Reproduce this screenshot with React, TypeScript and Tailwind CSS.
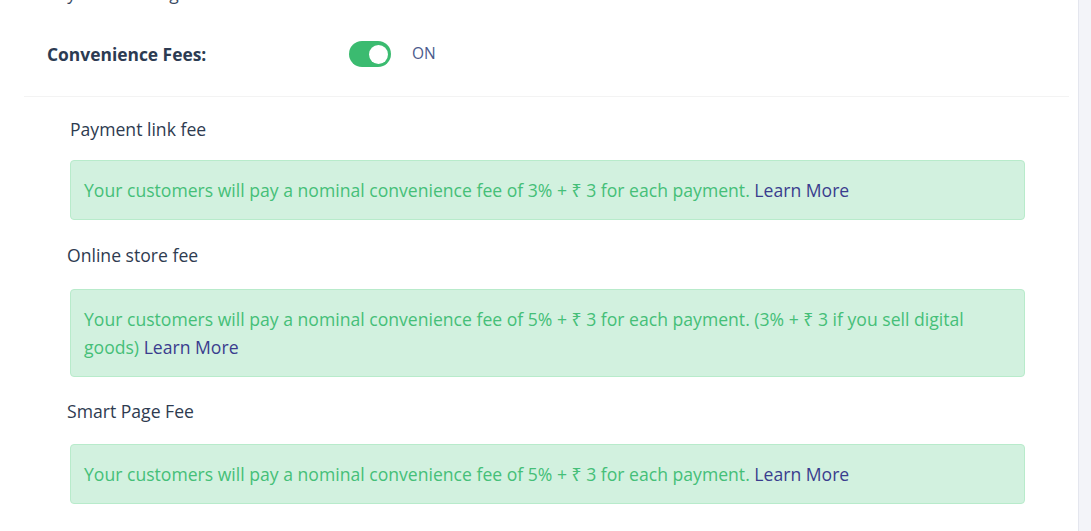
import React from 'react';

const fees = [
  {
    label: 'Payment link fee',
    indent: 'ml-[70px]',
    top: '',
    gap: 'mt-[19px]',
    text: 'Your customers will pay a nominal convenience fee of 3% + ₹ 3 for each payment.',
  },
  {
    label: 'Online store fee',
    indent: 'ml-[67px]',
    top: 'mt-[23px]',
    gap: 'mt-[22px]',
    text: 'Your customers will pay a nominal convenience fee of 5% + ₹ 3 for each payment. (3% + ₹ 3 if you sell digital goods)',
  },
  {
    label: 'Smart Page Fee',
    indent: 'ml-[67px]',
    top: 'mt-[22px]',
    gap: 'mt-[21px]',
    text: 'Your customers will pay a nominal convenience fee of 5% + ₹ 3 for each payment.',
  },
];

function Toggle({ on }: { on: boolean }) {
  return (
    <button
      className={`relative w-[42px] h-[26px] rounded-full ${on ? 'bg-[#3bbb70]' : 'bg-gray-300'}`}
    >
      <span
        className={`absolute top-[3.5px] w-[19px] h-[19px] rounded-full bg-white ${on ? 'left-[19.5px]' : 'left-[3.5px]'}`}
      ></span>
    </button>
  );
}

export default function App() {
  return (
    <div
      className="flex w-[1091px] h-[531px] overflow-hidden bg-white"
      style={{ fontFamily: '"Open Sans", "Noto Sans", sans-serif' }}
    >
      <div className="flex-1 flex flex-col">
        {/* 上の切れた行 */}
        <p className="-mt-[19px] ml-[47px] text-[17.5px] leading-[24px] text-[#3a4a63]">
          Payment settings
        </p>

        {/* Convenience Fees toggle */}
        <div className="flex items-center mt-[36px] ml-[47px]">
          <span className="w-[302px] text-[17.4px] font-bold text-[#2c3b52]">Convenience Fees:</span>
          <Toggle on={true} />
          <span className="ml-[21px] text-[15.5px] text-[#4b5a8c]">ON</span>
        </div>

        <div className="mt-[29px] ml-[24px] mr-[9px] h-px bg-[#f3f3f3]"></div>

        <div className="flex flex-col pt-[20px]">
          {fees.map((fee) => (
            <div key={fee.label} className={fee.top}>
              <p className={`${fee.indent} text-[17.6px] leading-[24px] text-[#2e3b50]`}>{fee.label}</p>
              <div
                className={`${fee.gap} ml-[70px] w-[955px] px-[13px] py-[15px] rounded-[4px] border border-[#b8ebcb] bg-[#d2f1df] text-[17.6px] leading-[28px] text-[#45bf78]`}
              >
                {fee.text}{' '}
                <a className="text-[#3a3d8e] cursor-pointer">Learn More</a>
              </div>
            </div>
          ))}
        </div>
      </div>
      <div className="w-[13px] border-l border-[#e4e6ee] bg-[#f3f4f9]"></div>
    </div>
  );
}
